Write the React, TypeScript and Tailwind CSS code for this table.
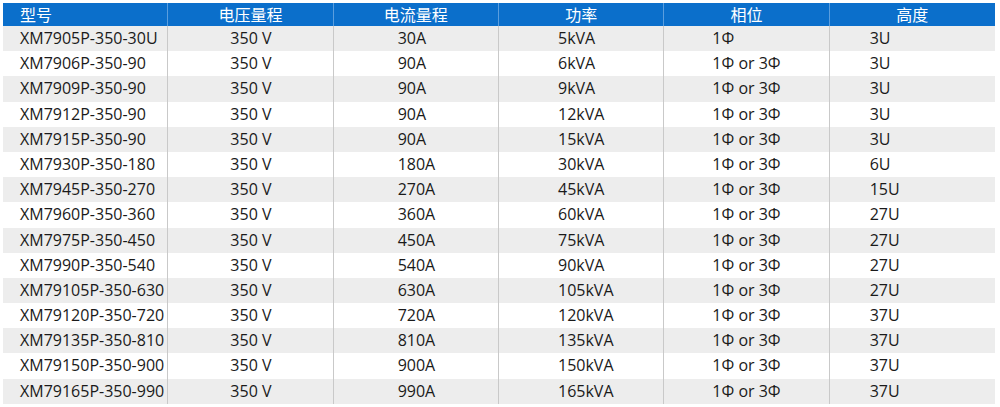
const columns = ['型号', '电压量程', '电流量程', '功率', '相位', '高度'];

const rows: string[][] = [
  ['XM7905P-350-30U', '350 V', '30A', '5kVA', '1Φ', '3U'],
  ['XM7906P-350-90', '350 V', '90A', '6kVA', '1Φ or 3Φ', '3U'],
  ['XM7909P-350-90', '350 V', '90A', '9kVA', '1Φ or 3Φ', '3U'],
  ['XM7912P-350-90', '350 V', '90A', '12kVA', '1Φ or 3Φ', '3U'],
  ['XM7915P-350-90', '350 V', '90A', '15kVA', '1Φ or 3Φ', '3U'],
  ['XM7930P-350-180', '350 V', '180A', '30kVA', '1Φ or 3Φ', '6U'],
  ['XM7945P-350-270', '350 V', '270A', '45kVA', '1Φ or 3Φ', '15U'],
  ['XM7960P-350-360', '350 V', '360A', '60kVA', '1Φ or 3Φ', '27U'],
  ['XM7975P-350-450', '350 V', '450A', '75kVA', '1Φ or 3Φ', '27U'],
  ['XM7990P-350-540', '350 V', '540A', '90kVA', '1Φ or 3Φ', '27U'],
  ['XM79105P-350-630', '350 V', '630A', '105kVA', '1Φ or 3Φ', '27U'],
  ['XM79120P-350-720', '350 V', '720A', '120kVA', '1Φ or 3Φ', '37U'],
  ['XM79135P-350-810', '350 V', '810A', '135kVA', '1Φ or 3Φ', '37U'],
  ['XM79150P-350-900', '350 V', '900A', '150kVA', '1Φ or 3Φ', '37U'],
  ['XM79165P-350-990', '350 V', '990A', '165kVA', '1Φ or 3Φ', '37U'],
];

// left padding of the body text in each column
const cellPad = ['pl-[17px]', 'pl-[62px]', 'pl-[64px]', 'pl-[59px]', 'pl-[48px]', 'pl-[40px]'];

export default function App() {
  return (
    <div className="w-[1000px] h-[407px] bg-white pt-[3px] pl-[3px] font-['Open_Sans','Noto_Sans_CJK_SC',sans-serif]">
      <div className="w-[992px]">
        {/* Header */}
        <div className="grid grid-cols-6 h-[23px] bg-[#0b6fcb] text-white text-[16px] leading-[23px]">
          {columns.map((c, i) => (
            <div
              key={c}
              className={`${i === 0 ? 'pl-[17px] text-left' : 'text-center'} ${
                i < 5 ? 'border-r border-[#5b9ede]' : ''
              } font-['Noto_Sans_CJK_SC',sans-serif]`}
            >
              {c}
            </div>
          ))}
        </div>

        {/* Body */}
        {rows.map((r, ri) => (
          <div
            key={r[0]}
            className={`grid grid-cols-6 h-[25.2px] text-[16px] leading-[25px] text-[#1a1a1a] ${
              ri % 2 === 0 ? 'bg-[#ededed]' : 'bg-white'
            }`}
          >
            {r.map((v, ci) => (
              <div
                key={ci}
                className={`${cellPad[ci]} whitespace-nowrap ${ci < 5 ? 'border-r border-[#c9c9c9]' : ''}`}
              >
                {v}
              </div>
            ))}
          </div>
        ))}
      </div>
    </div>
  );
}
